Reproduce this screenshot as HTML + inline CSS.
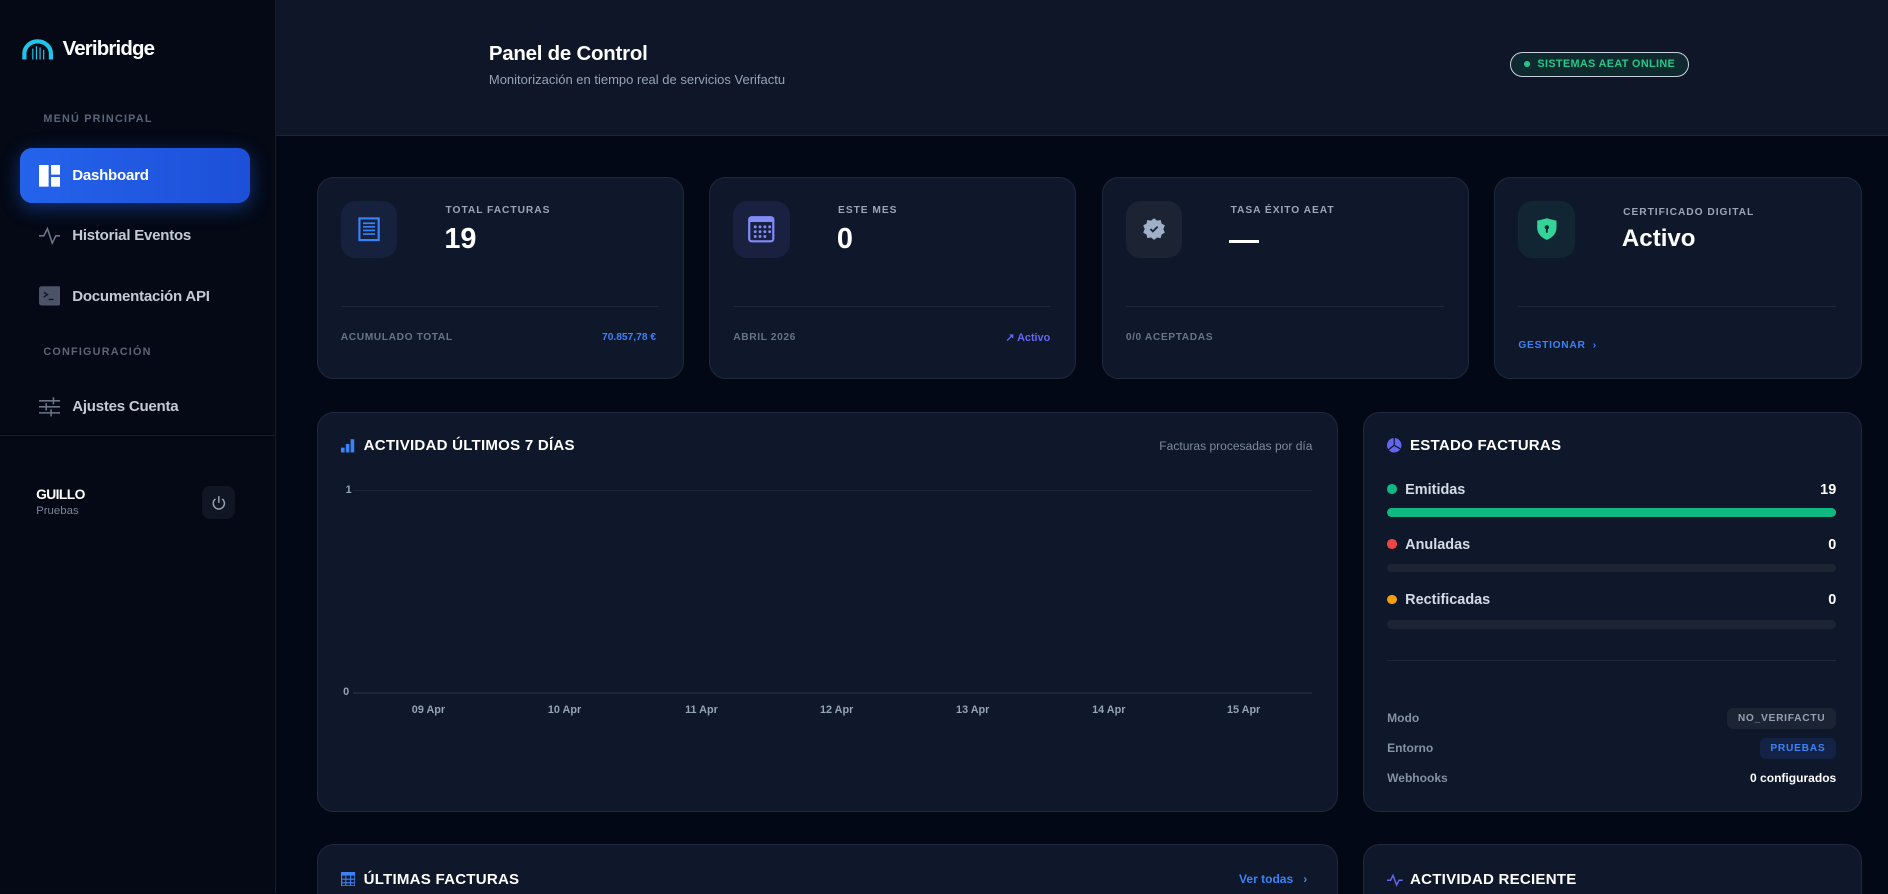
<!DOCTYPE html>
<html><head><meta charset="utf-8">
<style>
html{zoom:1.2041;overflow:hidden;height:742.5px}
*{box-sizing:border-box;margin:0;padding:0}
body{width:1568px;height:742.5px;overflow:hidden;background:#030816;font-family:"Liberation Sans",sans-serif;color:#fff;position:relative}
.abs{position:absolute}
.sb{left:0;top:0;width:229px;height:742px;background:#040915;border-right:1px solid #151c2b}
.sec{font-size:9px;font-weight:bold;letter-spacing:1px;color:#5b6577}
.nav{left:32px;font-size:12.5px;font-weight:bold;color:#c3cad6;display:flex;align-items:center;gap:10px;letter-spacing:-.2px}
.hdr{left:229px;top:0;width:1339px;height:113px;background:#0e1628;border-bottom:1px solid #1c2538}
.card{background:#0f172a;border:1px solid #1e293b;border-radius:14px}
.ib{width:47px;height:47px;border-radius:12px;display:flex;align-items:center;justify-content:center}
.lbl{font-size:8.5px;font-weight:bold;letter-spacing:.8px;color:#9aa6b8}
.val{font-size:24px;font-weight:bold}
.div{height:1px;background:#1e293b}
.ft{font-size:8.5px;font-weight:bold;letter-spacing:.5px;color:#64748b}
.tt{font-size:12.5px;font-weight:bold;letter-spacing:.2px}
.ax{font-size:9px;color:#94a3b8;font-weight:bold}
.row{left:1152px;width:373px;display:flex;justify-content:space-between;align-items:center;font-size:12px;font-weight:bold;color:#d5dbe5}
.dot{width:8px;height:8px;border-radius:50%;display:inline-block;margin-right:7px}
.bar{left:1152px;width:373px;height:7px;border-radius:4px;background:#1c2433}
.kv{left:1152px;width:373px;display:flex;justify-content:space-between;align-items:center;font-size:10px;font-weight:bold;color:#8391a6}
.pill{font-size:8.5px;font-weight:bold;letter-spacing:.6px;padding:4px 9px;border-radius:5px}
.bc{border-bottom:none;border-radius:14px 14px 0 0}
</style></head><body>
<div class="abs sb"></div>
<svg class="abs" style="left:18px;top:32px" width="26" height="18" viewBox="0 0 26 18"><path d="M2 17 V12 A11 10 0 0 1 24 12 V17" fill="none" stroke="#22c5e8" stroke-width="3.5"/><path d="M9 17V8M12 17V6M15 17V7M18 17V9" stroke="#22c5e8" stroke-width="1"/></svg>
<div class="abs" style="left:52px;top:31px;font-size:17px;font-weight:bold;letter-spacing:-.7px">Veribridge</div>
<div class="abs sec" style="left:36px;top:94px">MENÚ PRINCIPAL</div>
<div class="abs" style="left:17px;top:123px;width:191px;height:46px;border-radius:10px;background:linear-gradient(90deg,#2563eb,#1d4fd8);box-shadow:0 4px 16px rgba(37,99,235,.45)"></div>
<div class="abs nav" style="top:137px;color:#fff"><svg width="18" height="18" viewBox="0 0 18 18"><rect x="0" y="0" width="8" height="18" fill="#fff"/><rect x="10" y="0" width="8" height="8" fill="#fff"/><rect x="10" y="10" width="8" height="8" fill="#fff"/></svg>Dashboard</div>
<div class="abs nav" style="top:187px"><svg width="18" height="18" viewBox="0 0 18 18"><path d="M0 9H4L7 3L11 15L14 9H18" fill="none" stroke="#6b7588" stroke-width="1.3"/></svg>Historial Eventos</div>
<div class="abs nav" style="top:237px"><svg width="18" height="18" viewBox="0 0 18 18"><rect x="0" y="1" width="18" height="16" rx="2" fill="#4a5368"/><path d="M4 6l3 2-3 2M8 12h4" stroke="#111827" stroke-width="1.2" fill="none"/></svg>Documentación API</div>
<div class="abs sec" style="left:36px;top:287px">CONFIGURACIÓN</div>
<div class="abs nav" style="top:329px"><svg width="18" height="18" viewBox="0 0 18 18" stroke="#6b7588" stroke-width="1.3"><path d="M0 4h18M0 9h18M0 14h18M12 1v6M6 6v6M10 11v6"/></svg>Ajustes Cuenta</div>
<div class="abs" style="left:0;top:361px;width:229px;height:1px;background:#151c2b"></div>
<div class="abs" style="left:30px;top:404px;font-size:11.5px;font-weight:bold;letter-spacing:-.5px">GUILLO</div>
<div class="abs" style="left:30px;top:419px;font-size:9.5px;color:#7a8597">Pruebas</div>
<div class="abs" style="left:168px;top:404px;width:27px;height:27px;border-radius:7px;background:#111624;display:flex;align-items:center;justify-content:center"><svg width="13" height="13" viewBox="0 0 14 14" fill="none" stroke="#9aa3b2" stroke-width="1.3"><path d="M4 3.5A5 5 0 1 0 10 3.5M7 1v6"/></svg></div>

<div class="abs hdr"></div>
<div class="abs" style="left:406px;top:35px;font-size:17px;font-weight:bold;letter-spacing:-.2px">Panel de Control</div>
<div class="abs" style="left:406px;top:60px;font-size:10.8px;color:#94a3b8">Monitorización en tiempo real de servicios Verifactu</div>
<div class="abs" style="left:1254px;top:43px;width:149px;height:21px;border:1px solid #c9d1dc;border-radius:11px;background:#0f2a2f;display:flex;align-items:center;justify-content:center;gap:6px;font-size:9px;font-weight:bold;color:#22c98a;letter-spacing:.3px"><span style="width:5px;height:5px;border-radius:50%;background:#22c98a"></span>SISTEMAS AEAT ONLINE</div>

<div class="abs card" style="left:263px;top:147px;width:305px;height:168px"></div>
<div class="abs ib" style="left:283px;top:167px;background:#15213d"><svg width="20" height="22" viewBox="0 0 20 22"><rect x="2" y="2" width="16" height="18" fill="none" stroke="#3b82f6" stroke-width="1.8"/><path d="M5 6h10M5 9h10M5 12h10M5 15h10" stroke="#3b82f6" stroke-width="1.4"/></svg></div>
<div class="abs lbl" style="left:370px;top:170px">TOTAL FACTURAS</div>
<div class="abs val" style="left:369px;top:185px">19</div>
<div class="abs div" style="left:283px;top:254px;width:264px"></div>
<div class="abs ft" style="left:283px;top:276px">ACUMULADO TOTAL</div>
<div class="abs" style="left:500px;top:276px;font-size:8.5px;font-weight:bold;color:#3b82f6">70.857,78 €</div>

<div class="abs card" style="left:589px;top:147px;width:305px;height:168px"></div>
<div class="abs ib" style="left:609px;top:167px;background:#1a2140"><svg width="22" height="22" viewBox="0 0 22 22"><rect x="1" y="1" width="20" height="20" rx="2" fill="none" stroke="#818cf8" stroke-width="1.8"/><rect x="1" y="1" width="20" height="4" fill="#818cf8"/><g fill="#818cf8"><circle cx="6" cy="9" r="1.2"/><circle cx="10" cy="9" r="1.2"/><circle cx="14" cy="9" r="1.2"/><circle cx="18" cy="9" r="1.2"/><circle cx="6" cy="13" r="1.2"/><circle cx="10" cy="13" r="1.2"/><circle cx="14" cy="13" r="1.2"/><circle cx="18" cy="13" r="1.2"/><circle cx="6" cy="17" r="1.2"/><circle cx="10" cy="17" r="1.2"/><circle cx="14" cy="17" r="1.2"/></g></svg></div>
<div class="abs lbl" style="left:696px;top:170px">ESTE MES</div>
<div class="abs val" style="left:695px;top:185px">0</div>
<div class="abs div" style="left:609px;top:254px;width:264px"></div>
<div class="abs ft" style="left:609px;top:276px">ABRIL 2026</div>
<div class="abs" style="left:835px;top:275px;font-size:9px;font-weight:bold;color:#6366f1">↗ Activo</div>

<div class="abs card" style="left:915px;top:147px;width:305px;height:168px"></div>
<div class="abs ib" style="left:935px;top:167px;background:#1c2333"><svg width="20" height="20" viewBox="0 0 20 20"><path d="M10 1l2.5 2 3-.5.8 3 2.7 1.5-1.3 3 1.3 3-2.7 1.5-.8 3-3-.5L10 19l-2.5-2-3 .5-.8-3L1 13l1.3-3L1 7l2.7-1.5.8-3 3 .5z" fill="#9fb0c9"/><path d="M7 10l2 2 4-4" stroke="#1c2333" stroke-width="1.5" fill="none"/></svg></div>
<div class="abs lbl" style="left:1022px;top:170px">TASA ÉXITO AEAT</div>
<div class="abs" style="left:1021px;top:199px;width:25px;height:3px;background:#fff"></div>
<div class="abs div" style="left:935px;top:254px;width:264px"></div>
<div class="abs ft" style="left:935px;top:276px">0/0 ACEPTADAS</div>

<div class="abs card" style="left:1241px;top:147px;width:305px;height:168px"></div>
<div class="abs ib" style="left:1261px;top:167px;background:#112632"><svg width="18" height="20" viewBox="0 0 18 20"><path d="M9 1C12 2 15 2.5 17 3V9C17 14 13 17.5 9 19C5 17.5 1 14 1 9V3C3 2.5 6 2 9 1Z" fill="#34d399"/><circle cx="9" cy="8.5" r="1.8" fill="#0f2a2f"/><rect x="8.2" y="9" width="1.6" height="4" fill="#0f2a2f"/></svg></div>
<div class="abs lbl" style="left:1348px;top:172px">CERTIFICADO DIGITAL</div>
<div class="abs" style="left:1347px;top:187px;font-size:20px;font-weight:bold">Activo</div>
<div class="abs div" style="left:1261px;top:254px;width:264px"></div>
<div class="abs" style="left:1261px;top:282px;font-size:8.5px;font-weight:bold;letter-spacing:.6px;color:#3b82f6">GESTIONAR&nbsp; ›</div>

<div class="abs card" style="left:263px;top:342px;width:848px;height:332px"></div>
<svg class="abs" style="left:283px;top:364px" width="12" height="12" viewBox="0 0 12 12"><rect x="0" y="8" width="3" height="4" fill="#3b82f6"/><rect x="4" y="5" width="3" height="7" fill="#3b82f6"/><rect x="8" y="1" width="3" height="11" fill="#3b82f6"/></svg>
<div class="abs tt" style="left:302px;top:363px">ACTIVIDAD ÚLTIMOS 7 DÍAS</div>
<div class="abs" style="left:956px;top:365px;font-size:10px;color:#7d8aa0;width:134px;text-align:right;white-space:nowrap">Facturas procesadas por día</div>
<div class="abs ax" style="left:287px;top:402px">1</div>
<div class="abs" style="left:293px;top:407px;width:797px;height:1px;background:#1d2638"></div>
<div class="abs ax" style="left:285px;top:570px">0</div>
<div class="abs" style="left:293px;top:575px;width:797px;height:1px;background:#1d2638"></div>
<div class="abs ax" style="left:342px;top:585px">09 Apr</div>
<div class="abs ax" style="left:455px;top:585px">10 Apr</div>
<div class="abs ax" style="left:569px;top:585px">11 Apr</div>
<div class="abs ax" style="left:681px;top:585px">12 Apr</div>
<div class="abs ax" style="left:794px;top:585px">13 Apr</div>
<div class="abs ax" style="left:907px;top:585px">14 Apr</div>
<div class="abs ax" style="left:1019px;top:585px">15 Apr</div>

<div class="abs card" style="left:1132px;top:342px;width:414px;height:332px"></div>
<svg class="abs" style="left:1152px;top:364px" width="12" height="12" viewBox="0 0 12 12"><circle cx="6" cy="6" r="6" fill="#6366f1"/><path d="M6 6V0M6 6L11 9M6 6L1 10" stroke="#0f172a" stroke-width="1"/></svg>
<div class="abs tt" style="left:1171px;top:363px">ESTADO FACTURAS</div>
<div class="abs row" style="top:400px"><span><span class="dot" style="background:#10b981"></span>Emitidas</span><span style="color:#fff">19</span></div>
<div class="abs bar" style="top:422px;background:#10b981"></div>
<div class="abs row" style="top:446px"><span><span class="dot" style="background:#ef4444"></span>Anuladas</span><span style="color:#fff">0</span></div>
<div class="abs bar" style="top:468px"></div>
<div class="abs row" style="top:492px"><span><span class="dot" style="background:#f59e0b"></span>Rectificadas</span><span style="color:#fff">0</span></div>
<div class="abs bar" style="top:515px"></div>
<div class="abs div" style="left:1152px;top:548px;width:373px"></div>
<div class="abs kv" style="top:588px"><span>Modo</span><span class="pill" style="background:#1c2332;color:#94a0b2">NO_VERIFACTU</span></div>
<div class="abs kv" style="top:613px"><span>Entorno</span><span class="pill" style="background:#142345;color:#3b82f6">PRUEBAS</span></div>
<div class="abs kv" style="top:640px"><span>Webhooks</span><span style="color:#fff">0 configurados</span></div>

<div class="abs card bc" style="left:263px;top:701px;width:848px;height:42px"></div>
<svg class="abs" style="left:283px;top:724px" width="12" height="12" viewBox="0 0 12 12"><rect x="0.5" y="0.5" width="11" height="11" fill="none" stroke="#3b82f6"/><rect x="0" y="0" width="12" height="3" fill="#3b82f6"/><path d="M4 3v9M8 3v9M0 6h12M0 9h12" stroke="#3b82f6" stroke-width=".9"/></svg>
<div class="abs tt" style="left:302px;top:723px">ÚLTIMAS FACTURAS</div>
<div class="abs" style="left:1029px;top:724px;font-size:10px;font-weight:bold;color:#3b82f6">Ver todas&nbsp;&nbsp; ›</div>
<div class="abs card bc" style="left:1132px;top:701px;width:414px;height:42px"></div>
<svg class="abs" style="left:1152px;top:725px" width="13" height="12" viewBox="0 0 13 12"><path d="M0 6h3l2-4 3 8 2-4h3" fill="none" stroke="#6366f1" stroke-width="1.2"/></svg>
<div class="abs tt" style="left:1171px;top:723px">ACTIVIDAD RECIENTE</div>
</body></html>
